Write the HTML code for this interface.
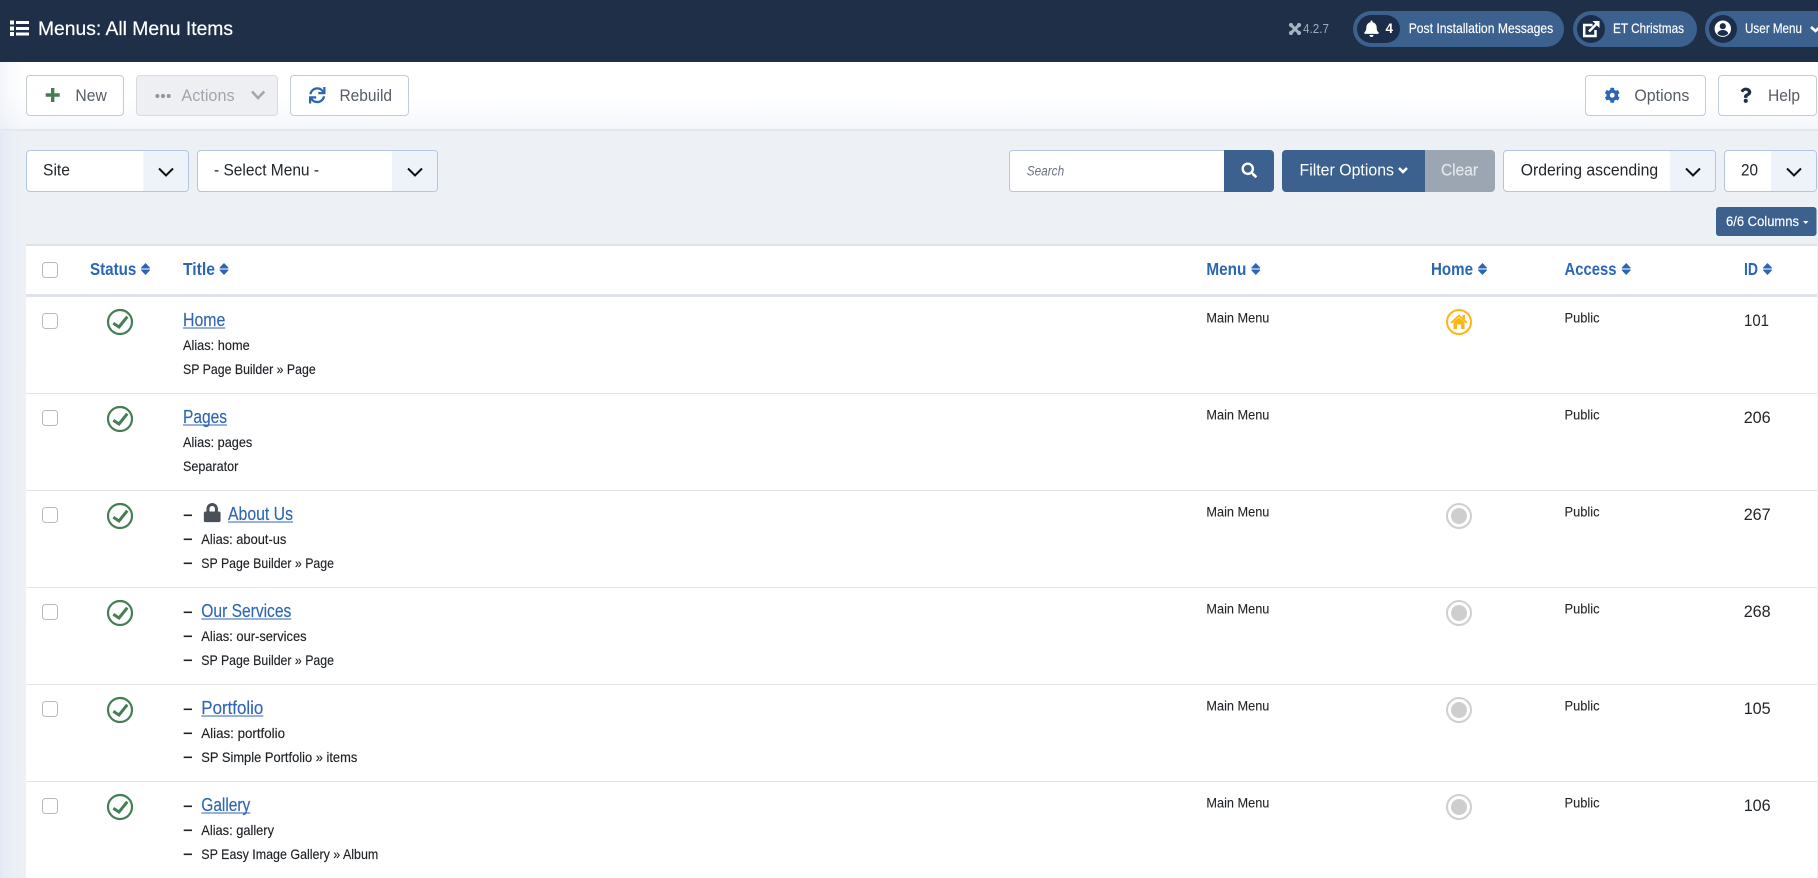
<!DOCTYPE html>
<html lang="en"><head><meta charset="utf-8"><title>Menus: All Menu Items</title>
<style>
html,body{margin:0;padding:0;width:1818px;height:878px;overflow:hidden;background:#edf1f6}
svg{display:block}
text{font-family:"Liberation Sans",Arial,sans-serif;white-space:pre}
.hd{font-size:14px;fill:#fff;stroke:#fff;stroke-width:.15px}
.btn{font-size:17px;fill:#555c66}
.sel{font-size:17px;fill:#22262a}
.th{font-size:17.5px;font-weight:bold;fill:#2b66b5}
.lnk{font-size:18px;fill:#2f66b5;stroke:#2f66b5;stroke-width:.15px}
.sm{font-size:14px;fill:#1d2125;stroke:#1d2125;stroke-width:.15px}
.cell{font-size:13.5px;fill:#22262a;stroke:#22262a;stroke-width:.1px}
.id{font-size:17px;fill:#22262a}
</style></head><body>
<svg xmlns="http://www.w3.org/2000/svg" width="1818" height="878" viewBox="0 0 1818 878">
<defs>
<linearGradient id="tb" x1="0" y1="0" x2="0" y2="1"><stop offset="0" stop-color="#fff"/><stop offset="0.5" stop-color="#fff"/><stop offset="1" stop-color="#f4f7fb"/></linearGradient>
<linearGradient id="lf" x1="0" y1="0" x2="1" y2="0"><stop offset="0" stop-color="#e3e9f4"/><stop offset="1" stop-color="#edf1f6" stop-opacity="0"/></linearGradient>
<linearGradient id="sh" x1="0" y1="0" x2="0" y2="1"><stop offset="0" stop-color="#dde3ec"/><stop offset="1" stop-color="#edf1f6"/></linearGradient>
<g id="sort" fill="#2b66b5"><path d="M4.5 0 L9 4.8 Q9.2 5.5 8.3 5.5 H0.7 Q-0.2 5.5 0 4.8Z"/><path d="M4.5 12 L9 7.2 Q9.2 6.5 8.3 6.5 H0.7 Q-0.2 6.5 0 7.2Z"/></g>
<g id="stat" fill="none" stroke="#457d54"><circle cx="120" cy="25" r="12" stroke-width="2.2"/><path d="M113.3 26.3 L119 30 L127.3 19.7" stroke-width="3"/></g>
<g id="cb"><rect x="42.5" y="16.5" width="15" height="15" rx="3" fill="#fff" stroke="#b6bbc2"/></g>
<g id="rad"><circle cx="1459" cy="25" r="12" fill="none" stroke="#cfcfcf" stroke-width="2"/><circle cx="1459" cy="25" r="8" fill="#cecece"/></g>
<path id="chev" d="M0 0 L7 7 L14 0" fill="none" stroke="#111" stroke-width="2"/>
</defs>

<rect width="1818" height="878" fill="#edf1f6"/>
<rect y="129" width="26" height="749" fill="url(#lf)"/>

<!-- Header -->
<rect width="1818" height="62" fill="#1f2f48"/>
<g fill="#fff"><rect x="10" y="20.5" width="4" height="4"/><rect x="10" y="26.5" width="4" height="4"/><rect x="10" y="32" width="4" height="4"/><rect x="16" y="21" width="13" height="3"/><rect x="16" y="27" width="13" height="3"/><rect x="16" y="32.5" width="13" height="3"/></g>
<text x="38" y="35" font-size="19.5" fill="#fff" stroke="#fff" stroke-width=".2" textLength="195" lengthAdjust="spacingAndGlyphs">Menus: All Menu Items</text>

<g stroke="#a6b1c1" stroke-width="3" fill="none"><path d="M1291.2 25.2 L1298.8 32.8 M1298.8 25.2 L1291.2 32.8"/></g>
<g fill="#a6b1c1"><circle cx="1291" cy="25" r="2.1"/><circle cx="1299" cy="25" r="2.1"/><circle cx="1291" cy="33" r="2.1"/><circle cx="1299" cy="33" r="2.1"/></g>
<text x="1303" y="33" font-size="13" fill="#9eabbd" textLength="26" lengthAdjust="spacingAndGlyphs">4.2.7</text>

<rect x="1353" y="11" width="211" height="36" rx="18" fill="#3d618f"/>
<rect x="1357" y="15" width="43" height="28" rx="14" fill="#1c2d49"/>
<svg x="1364" y="20.5" width="15" height="16.5" viewBox="0 0 448 512" fill="#fff"><path d="M224 512c35.32 0 63.97-28.65 63.97-64H160.03c0 35.35 28.65 64 63.97 64zm215.39-149.71c-19.32-20.76-55.47-51.99-55.47-154.29 0-77.7-54.48-139.9-127.94-155.16V32c0-17.67-14.32-32-31.98-32s-31.98 14.33-31.98 32v20.84C118.56 68.1 64.08 130.3 64.08 208c0 102.3-36.15 133.53-55.47 154.29-6 6.45-8.66 14.16-8.61 21.71.11 16.4 12.98 32 32.1 32h383.8c19.12 0 32-15.6 32.1-32 .05-7.55-2.61-15.27-8.61-21.71z"/></svg>
<text x="1385.5" y="33" font-size="13.5" font-weight="bold" fill="#fff" textLength="7.5" lengthAdjust="spacingAndGlyphs">4</text>
<text class="hd" x="1408.7" y="33" textLength="144.5" lengthAdjust="spacingAndGlyphs">Post Installation Messages</text>

<rect x="1573" y="11" width="124" height="36" rx="18" fill="#3d618f"/>
<circle cx="1591" cy="29" r="14" fill="#1c2d49"/>
<g fill="none" stroke="#fff" stroke-width="2.5"><path d="M1592.5 25 H1584.2 V36 H1595.5 V30"/><path d="M1589 31.5 L1597.5 23"/></g><path d="M1592.5 21 H1599.5 V28 Z" fill="#fff"/>
<text class="hd" x="1613" y="33" textLength="71" lengthAdjust="spacingAndGlyphs">ET Christmas</text>

<rect x="1705" y="11" width="130" height="36" rx="18" fill="#3d618f"/>
<circle cx="1723" cy="29" r="14" fill="#1c2d49"/>
<circle cx="1722.8" cy="28.7" r="8.2" fill="#fff"/>
<circle cx="1722.8" cy="26.2" r="3.1" fill="#1c2d49"/>
<path d="M1717.4 33.8 a5.4 3.8 0 0 1 10.8 0 a8 8 0 0 1 -10.8 0z" fill="#1c2d49"/>
<text class="hd" x="1745" y="33" textLength="57" lengthAdjust="spacingAndGlyphs">User Menu</text>
<path d="M1811 27 L1815.5 31 L1820 27" fill="none" stroke="#fff" stroke-width="2.6"/>

<!-- Toolbar -->
<rect y="62" width="1818" height="67" fill="url(#tb)"/>
<rect y="62" width="26" height="67" fill="url(#lf)" opacity=".45"/>
<rect y="129" width="1818" height="3" fill="url(#sh)"/>

<rect x="26.5" y="75.5" width="97" height="40" rx="3.5" fill="#fff" stroke="#c3cbd8"/>
<path d="M52.7 88 V102 M45.7 95 H59.7" stroke="#457d54" stroke-width="3.4" fill="none"/>
<text class="btn" x="75.4" y="101" textLength="31.4" lengthAdjust="spacingAndGlyphs">New</text>

<rect x="136.5" y="75.5" width="141" height="40" rx="3.5" fill="#edeff3" stroke="#d8dbe0"/>
<g fill="#8f969e"><circle cx="157.4" cy="96" r="2"/><circle cx="163" cy="96" r="2"/><circle cx="168.7" cy="96" r="2"/></g>
<text class="btn" style="fill:#a0a6ae" x="181.4" y="101" textLength="53.2" lengthAdjust="spacingAndGlyphs">Actions</text>
<path d="M252 91.5 L258 98 L264.3 91.5" fill="none" stroke="#a0a6ae" stroke-width="2.5"/>

<rect x="290.5" y="75.5" width="118" height="40" rx="3.5" fill="#fff" stroke="#c3cbd8"/>
<svg x="309" y="87" width="16.5" height="16.5" viewBox="0 0 512 512" fill="#2b66b5"><path d="M440.65 12.57l4 82.77A247.16 247.16 0 0 0 255.83 8C134.73 8 33.91 94.92 12.29 209.82A12 12 0 0 0 24.09 224h49.05a12 12 0 0 0 11.67-9.26 175.91 175.91 0 0 1 317-56.94l-101.46-4.86a12 12 0 0 0-12.57 12v47.41a12 12 0 0 0 12 12H500a12 12 0 0 0 12-12V12a12 12 0 0 0-12-12h-47.37a12 12 0 0 0-11.98 12.57zM255.83 432a175.61 175.61 0 0 1-146-77.8l101.8 4.87a12 12 0 0 0 12.57-12v-47.4a12 12 0 0 0-12-12H12a12 12 0 0 0-12 12V500a12 12 0 0 0 12 12h47.35a12 12 0 0 0 12-12.6l-4.15-82.57A247.17 247.17 0 0 0 255.83 504c121.11 0 221.93-86.92 243.55-201.82a12 12 0 0 0-11.8-14.18h-49.05a12 12 0 0 0-11.67 9.26A175.86 175.86 0 0 1 255.83 432z"/></svg>
<text class="btn" x="339.5" y="101" textLength="52.5" lengthAdjust="spacingAndGlyphs">Rebuild</text>

<rect x="1585.5" y="75.5" width="120" height="40" rx="3.5" fill="#fff" stroke="#c3cbd8"/>
<svg x="1604.5" y="87.5" width="15.5" height="15.5" viewBox="0 0 512 512" fill="#2b66b5"><path d="M487.4 315.7l-42.6-24.6c4.3-23.2 4.3-47 0-70.2l42.6-24.6c4.9-2.8 7.1-8.6 5.5-14-11.1-35.6-30-67.8-54.7-94.6-3.8-4.1-10-5.1-14.8-2.3L380.8 110c-17.9-15.4-38.5-27.3-60.8-35.1V25.8c0-5.6-3.9-10.5-9.4-11.7-36.7-8.2-74.3-7.8-109.2 0-5.5 1.2-9.4 6.1-9.4 11.7V75c-22.2 7.9-42.8 19.8-60.8 35.1L88.7 85.5c-4.9-2.8-11-1.9-14.8 2.3-24.7 26.7-43.6 58.9-54.7 94.6-1.7 5.4.6 11.2 5.5 14L67.3 221c-4.3 23.2-4.3 47 0 70.2l-42.6 24.6c-4.9 2.8-7.1 8.6-5.5 14 11.1 35.6 30 67.8 54.7 94.6 3.8 4.1 10 5.1 14.8 2.3l42.6-24.6c17.9 15.4 38.5 27.3 60.8 35.1v49.2c0 5.6 3.9 10.5 9.4 11.7 36.7 8.2 74.3 7.8 109.2 0 5.5-1.2 9.4-6.1 9.4-11.7v-49.2c22.2-7.9 42.8-19.8 60.8-35.1l42.6 24.6c4.9 2.8 11 1.9 14.8-2.3 24.7-26.7 43.6-58.9 54.7-94.6 1.5-5.5-.7-11.3-5.6-14.1zM256 336c-44.1 0-80-35.9-80-80s35.9-80 80-80 80 35.9 80 80-35.9 80-80 80z"/></svg>
<text class="btn" x="1634.4" y="101" textLength="55" lengthAdjust="spacingAndGlyphs">Options</text>

<rect x="1718.5" y="75.5" width="98" height="40" rx="3.5" fill="#fff" stroke="#c3cbd8"/>
<svg x="1740" y="87.5" width="11.5" height="15.5" viewBox="0 0 384 512" fill="#1f2f48"><path d="M202.021 0C122.202 0 70.503 32.703 29.914 91.026c-7.363 10.58-5.093 25.086 5.178 32.874l43.138 32.709c10.373 7.865 25.132 6.026 33.253-4.148 25.049-31.381 43.63-49.449 82.757-49.449 30.764 0 68.816 19.799 68.816 49.631 0 22.552-18.617 34.134-48.993 51.164-35.423 19.86-82.299 44.576-82.299 106.405V320c0 13.255 10.745 24 24 24h72.471c13.255 0 24-10.745 24-24v-5.773c0-42.86 125.268-44.645 125.268-160.627C377.504 66.256 286.902 0 202.021 0zM192 373.459c-38.196 0-69.271 31.075-69.271 69.271 0 38.195 31.075 69.27 69.271 69.27s69.271-31.075 69.271-69.271-31.075-69.27-69.271-69.27z"/></svg>
<text class="btn" x="1768" y="101" textLength="32" lengthAdjust="spacingAndGlyphs">Help</text>

<!-- Filters -->
<rect x="26.5" y="150.5" width="162" height="41" rx="3.5" fill="#fff" stroke="#b3c5e0"/>
<path d="M143.5 151 H185 a3 3 0 0 1 3 3 V188 a3 3 0 0 1 -3 3 H143.5Z" fill="#eef3fa"/>
<text class="sel" x="43" y="175.5" textLength="27" lengthAdjust="spacingAndGlyphs">Site</text>
<use href="#chev" x="159" y="168.5"/>

<rect x="197.5" y="150.5" width="240" height="41" rx="3.5" fill="#fff" stroke="#b3c5e0"/>
<path d="M392 151 H434 a3 3 0 0 1 3 3 V188 a3 3 0 0 1 -3 3 H392Z" fill="#eef3fa"/>
<text class="sel" x="214" y="175.5" textLength="105" lengthAdjust="spacingAndGlyphs">- Select Menu -</text>
<use href="#chev" x="408" y="168.5"/>

<path d="M1224.5 150.5 H1012.5 a3 3 0 0 0 -3 3 V188.5 a3 3 0 0 0 3 3 H1224.5Z" fill="#fff" stroke="#b3c5e0"/>
<text x="1026.7" y="175.5" font-size="13.5" font-style="italic" fill="#6b7280" textLength="37.5" lengthAdjust="spacingAndGlyphs">Search</text>
<path d="M1224 150 H1270 a4 4 0 0 1 4 4 V188 a4 4 0 0 1 -4 4 H1224Z" fill="#3d618f"/>
<svg x="1241" y="162.5" width="16.5" height="15.5" viewBox="0 0 512 512" fill="#fff"><path d="M505 442.7L405.3 343c-4.5-4.5-10.6-7-17-7H372c27.6-35.3 44-79.7 44-128C416 93.1 322.9 0 208 0S0 93.1 0 208s93.1 208 208 208c48.3 0 92.7-16.4 128-44v16.3c0 6.4 2.5 12.5 7 17l99.7 99.7c9.4 9.4 24.6 9.4 33.9 0l28.3-28.3c9.4-9.4 9.4-24.6.1-34zM208 336c-70.7 0-128-57.2-128-128 0-70.7 57.2-128 128-128 70.7 0 128 57.2 128 128 0 70.7-57.2 128-128 128z"/></svg>

<path d="M1425 150 H1286 a4 4 0 0 0 -4 4 V188 a4 4 0 0 0 4 4 H1425Z" fill="#3d618f"/>
<text x="1299.5" y="175.5" font-size="17" fill="#fff" textLength="94.5" lengthAdjust="spacingAndGlyphs">Filter Options</text>
<path d="M1399 168 L1403 172 L1407 168" fill="none" stroke="#fff" stroke-width="2.6"/>
<path d="M1425 150 H1491 a4 4 0 0 1 4 4 V188 a4 4 0 0 1 -4 4 H1425Z" fill="#9ba6b2"/>
<text x="1441" y="175.5" font-size="17" fill="#e3e6ea" stroke="#e3e6ea" stroke-width=".2" textLength="37" lengthAdjust="spacingAndGlyphs">Clear</text>

<rect x="1503.5" y="150.5" width="212" height="41" rx="3.5" fill="#fff" stroke="#b3c5e0"/>
<path d="M1670 151 H1712 a3 3 0 0 1 3 3 V188 a3 3 0 0 1 -3 3 H1670Z" fill="#eef3fa"/>
<text class="sel" x="1520.7" y="175.5" textLength="137.5" lengthAdjust="spacingAndGlyphs">Ordering ascending</text>
<use href="#chev" x="1686" y="168.5"/>

<rect x="1724.5" y="150.5" width="92" height="41" rx="3.5" fill="#fff" stroke="#b3c5e0"/>
<path d="M1771 151 H1813 a3 3 0 0 1 3 3 V188 a3 3 0 0 1 -3 3 H1771Z" fill="#eef3fa"/>
<text class="sel" x="1741" y="175.5" textLength="17" lengthAdjust="spacingAndGlyphs">20</text>
<use href="#chev" x="1787" y="168.5"/>

<rect x="1716" y="207" width="100.5" height="29" rx="3" fill="#3d618f"/>
<text x="1726" y="226" font-size="13.5" fill="#fff" stroke="#fff" stroke-width=".15" textLength="73" lengthAdjust="spacingAndGlyphs">6/6 Columns</text>
<path d="M1803 221 H1808.5 L1805.75 224Z" fill="#fff"/>

<!-- Table -->
<rect x="26" y="244" width="1791" height="634" fill="#fff"/>
<rect x="26" y="244" width="1791" height="2" fill="#dfe3e8"/>
<rect x="26" y="294" width="1791" height="3" fill="#dfe3e8"/>
<rect x="26" y="393" width="1791" height="1" fill="#e0e3e8"/>
<rect x="26" y="490" width="1791" height="1" fill="#e0e3e8"/>
<rect x="26" y="587" width="1791" height="1" fill="#e0e3e8"/>
<rect x="26" y="684" width="1791" height="1" fill="#e0e3e8"/>
<rect x="26" y="781" width="1791" height="1" fill="#e0e3e8"/>

<rect x="42.5" y="262.5" width="15" height="15" rx="3" fill="#fff" stroke="#b6bbc2"/>
<text class="th" x="90" y="275" textLength="46.3" lengthAdjust="spacingAndGlyphs">Status</text><use href="#sort" x="141" y="263"/>
<text class="th" x="183" y="275" textLength="32" lengthAdjust="spacingAndGlyphs">Title</text><use href="#sort" x="219.5" y="263"/>
<text class="th" x="1206.4" y="275" textLength="40" lengthAdjust="spacingAndGlyphs">Menu</text><use href="#sort" x="1251.3" y="263"/>
<text class="th" x="1431" y="275" textLength="42" lengthAdjust="spacingAndGlyphs">Home</text><use href="#sort" x="1478" y="263"/>
<text class="th" x="1564.5" y="275" textLength="52" lengthAdjust="spacingAndGlyphs">Access</text><use href="#sort" x="1621.7" y="263"/>
<text class="th" x="1744" y="275" textLength="14" lengthAdjust="spacingAndGlyphs">ID</text><use href="#sort" x="1763" y="263"/>

<!-- Row 1 -->
<g transform="translate(0,297)">
<use href="#cb"/><use href="#stat"/>
<text class="lnk" x="183" y="29" textLength="42.3" lengthAdjust="spacingAndGlyphs">Home</text><rect x="183" y="30.5" width="42.3" height="1" fill="#2f66b5"/>
<text class="sm" x="183" y="53" textLength="66.7" lengthAdjust="spacingAndGlyphs">Alias: home</text>
<text class="sm" x="183" y="77" textLength="132.7" lengthAdjust="spacingAndGlyphs">SP Page Builder » Page</text>
<text class="cell" x="1206.4" y="25.5" textLength="63" lengthAdjust="spacingAndGlyphs">Main Menu</text>
<circle cx="1459" cy="25" r="12" fill="none" stroke="#ffb514" stroke-width="2"/>
<path d="M1451 26 L1459 18.5 L1467 26" fill="none" stroke="#ffb514" stroke-width="1.8"/>
<path d="M1453.5 25 L1459 20.5 L1464.5 25 V32 H1461 V27.5 H1457 V32 H1453.5Z M1462.5 18 H1465 V22.5 L1462.5 20.5Z" fill="#ffb514"/>
<text class="cell" x="1564.5" y="25.5" textLength="35" lengthAdjust="spacingAndGlyphs">Public</text>
<text class="id" x="1744" y="29" textLength="25" lengthAdjust="spacingAndGlyphs">101</text>
</g>
<!-- Row 2 -->
<g transform="translate(0,394)">
<use href="#cb"/><use href="#stat"/>
<text class="lnk" x="183" y="29" textLength="44" lengthAdjust="spacingAndGlyphs">Pages</text><rect x="183" y="30.5" width="44" height="1" fill="#2f66b5"/>
<text class="sm" x="183" y="53" textLength="69.3" lengthAdjust="spacingAndGlyphs">Alias: pages</text>
<text class="sm" x="183" y="77" textLength="55.3" lengthAdjust="spacingAndGlyphs">Separator</text>
<text class="cell" x="1206.4" y="25.5" textLength="63" lengthAdjust="spacingAndGlyphs">Main Menu</text>
<text class="cell" x="1564.5" y="25.5" textLength="35" lengthAdjust="spacingAndGlyphs">Public</text>
<text class="id" x="1743.7" y="29" textLength="27" lengthAdjust="spacingAndGlyphs">206</text>
</g>
<!-- Row 3 -->
<g transform="translate(0,491)">
<use href="#cb"/><use href="#stat"/>
<rect x="183.7" y="23.5" width="8.3" height="1.6" fill="#222"/><rect x="183.7" y="47.5" width="8.3" height="1.6" fill="#222"/><rect x="183.7" y="71.5" width="8.3" height="1.6" fill="#222"/>
<svg x="203.7" y="12" width="17" height="19.3" viewBox="0 0 448 512" fill="#495057"><path d="M400 224h-24v-72C376 68.2 307.8 0 224 0S72 68.2 72 152v72H48c-26.5 0-48 21.5-48 48v192c0 26.5 21.5 48 48 48h352c26.5 0 48-21.5 48-48V272c0-26.5-21.5-48-48-48zm-104 0H152v-72c0-39.7 32.3-72 72-72s72 32.3 72 72v72z"/></svg>
<text class="lnk" x="228" y="29" textLength="65" lengthAdjust="spacingAndGlyphs">About Us</text><rect x="228" y="30.5" width="65" height="1" fill="#2f66b5"/>
<text class="sm" x="201.3" y="53" textLength="85" lengthAdjust="spacingAndGlyphs">Alias: about-us</text>
<text class="sm" x="201.3" y="77" textLength="132.7" lengthAdjust="spacingAndGlyphs">SP Page Builder » Page</text>
<text class="cell" x="1206.4" y="25.5" textLength="63" lengthAdjust="spacingAndGlyphs">Main Menu</text>
<use href="#rad"/>
<text class="cell" x="1564.5" y="25.5" textLength="35" lengthAdjust="spacingAndGlyphs">Public</text>
<text class="id" x="1743.7" y="29" textLength="27" lengthAdjust="spacingAndGlyphs">267</text>
</g>
<!-- Row 4 -->
<g transform="translate(0,588)">
<use href="#cb"/><use href="#stat"/>
<rect x="183.7" y="23.5" width="8.3" height="1.6" fill="#222"/><rect x="183.7" y="47.5" width="8.3" height="1.6" fill="#222"/><rect x="183.7" y="71.5" width="8.3" height="1.6" fill="#222"/>
<text class="lnk" x="201.3" y="29" textLength="90" lengthAdjust="spacingAndGlyphs">Our Services</text><rect x="201.3" y="30.5" width="90" height="1" fill="#2f66b5"/>
<text class="sm" x="201.3" y="53" textLength="105.3" lengthAdjust="spacingAndGlyphs">Alias: our-services</text>
<text class="sm" x="201.3" y="77" textLength="132.7" lengthAdjust="spacingAndGlyphs">SP Page Builder » Page</text>
<text class="cell" x="1206.4" y="25.5" textLength="63" lengthAdjust="spacingAndGlyphs">Main Menu</text>
<use href="#rad"/>
<text class="cell" x="1564.5" y="25.5" textLength="35" lengthAdjust="spacingAndGlyphs">Public</text>
<text class="id" x="1743.7" y="29" textLength="27" lengthAdjust="spacingAndGlyphs">268</text>
</g>
<!-- Row 5 -->
<g transform="translate(0,685)">
<use href="#cb"/><use href="#stat"/>
<rect x="183.7" y="23.5" width="8.3" height="1.6" fill="#222"/><rect x="183.7" y="47.5" width="8.3" height="1.6" fill="#222"/><rect x="183.7" y="71.5" width="8.3" height="1.6" fill="#222"/>
<text class="lnk" x="201.3" y="29" textLength="62" lengthAdjust="spacingAndGlyphs">Portfolio</text><rect x="201.3" y="30.5" width="62" height="1" fill="#2f66b5"/>
<text class="sm" x="201.3" y="53" textLength="83.7" lengthAdjust="spacingAndGlyphs">Alias: portfolio</text>
<text class="sm" x="201.3" y="77" textLength="156" lengthAdjust="spacingAndGlyphs">SP Simple Portfolio » items</text>
<text class="cell" x="1206.4" y="25.5" textLength="63" lengthAdjust="spacingAndGlyphs">Main Menu</text>
<use href="#rad"/>
<text class="cell" x="1564.5" y="25.5" textLength="35" lengthAdjust="spacingAndGlyphs">Public</text>
<text class="id" x="1743.7" y="29" textLength="27" lengthAdjust="spacingAndGlyphs">105</text>
</g>
<!-- Row 6 -->
<g transform="translate(0,782)">
<use href="#cb"/><use href="#stat"/>
<rect x="183.7" y="23.5" width="8.3" height="1.6" fill="#222"/><rect x="183.7" y="47.5" width="8.3" height="1.6" fill="#222"/><rect x="183.7" y="71.5" width="8.3" height="1.6" fill="#222"/>
<text class="lnk" x="201.3" y="29" textLength="49" lengthAdjust="spacingAndGlyphs">Gallery</text><rect x="201.3" y="30.5" width="49" height="1" fill="#2f66b5"/>
<text class="sm" x="201.3" y="53" textLength="72.7" lengthAdjust="spacingAndGlyphs">Alias: gallery</text>
<text class="sm" x="201.3" y="77" textLength="177" lengthAdjust="spacingAndGlyphs">SP Easy Image Gallery » Album</text>
<text class="cell" x="1206.4" y="25.5" textLength="63" lengthAdjust="spacingAndGlyphs">Main Menu</text>
<use href="#rad"/>
<text class="cell" x="1564.5" y="25.5" textLength="35" lengthAdjust="spacingAndGlyphs">Public</text>
<text class="id" x="1743.7" y="29" textLength="27" lengthAdjust="spacingAndGlyphs">106</text>
</g>
</svg>
</body></html>
